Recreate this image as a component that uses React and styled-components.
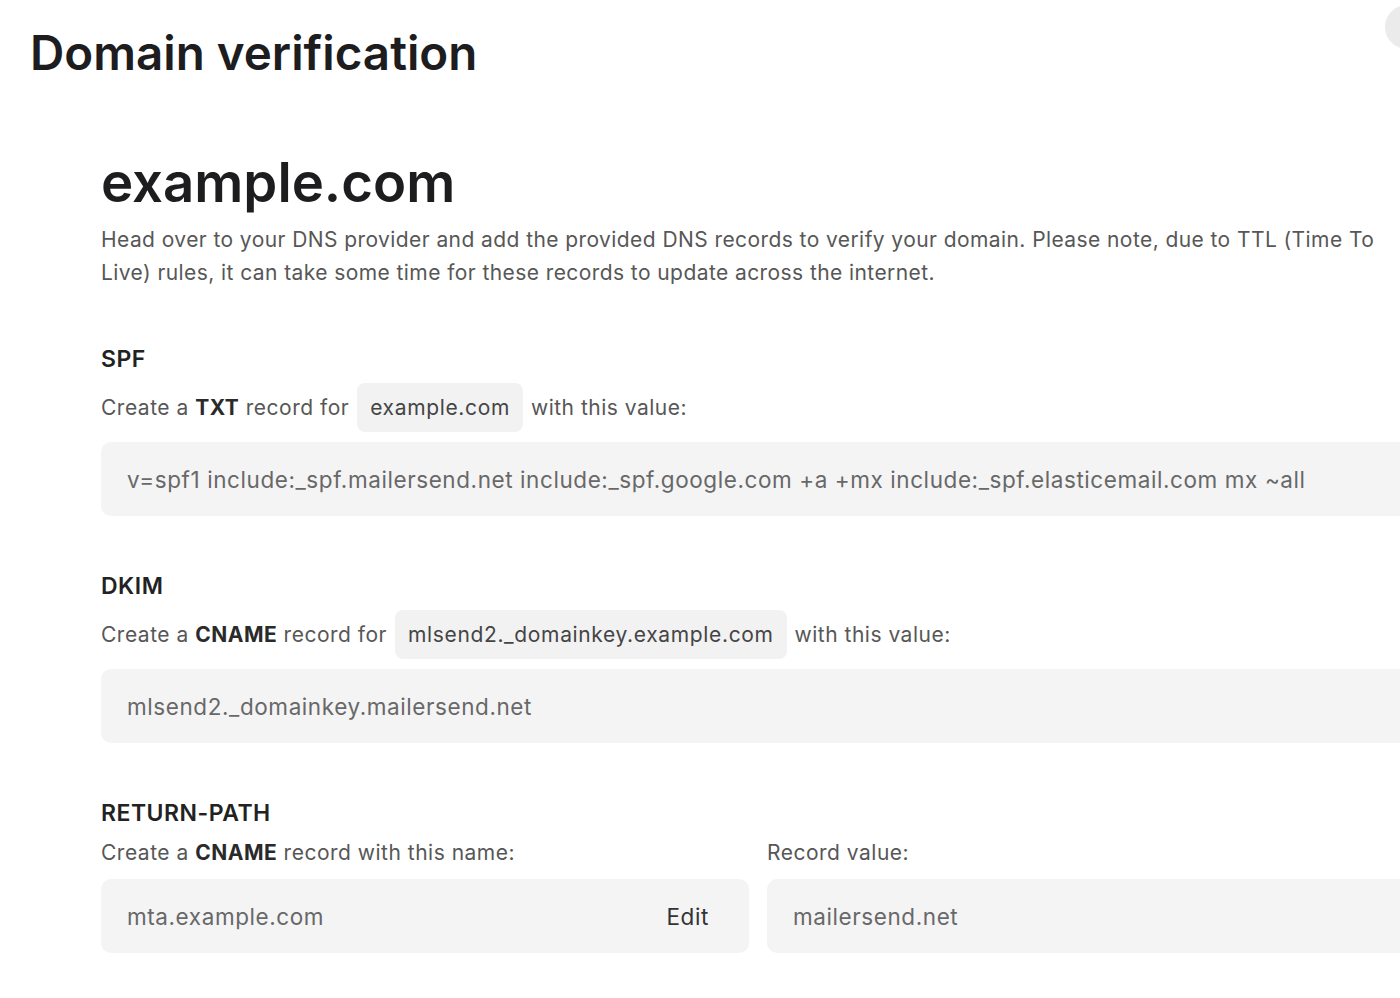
import React from 'react'
import styled, { createGlobalStyle } from 'styled-components'

const GlobalStyle = createGlobalStyle`
    html, body {
        margin: 0;
        padding: 0;
        background: #ffffff;
        overflow: hidden;
    }
    body {
        font-family: Inter, "Noto Sans", "Liberation Sans", sans-serif;
        -webkit-font-smoothing: antialiased;
    }
`;

const Page = styled.div`
    width: 1460px;
    min-height: 998px;
`;

const Header = styled.header`
    display: flex;
    justify-content: space-between;
    align-items: flex-start;
    padding: 0 31px 0 30px;
`;

const PageTitle = styled.h1`
    margin: 24px 0 0;
    font-size: 47.5px;
    line-height: 1.2;
    font-weight: 600;
    color: #1d1d1f;
`;

const Avatar = styled.div`
    width: 44px;
    height: 44px;
    margin-top: 5px;
    border-radius: 50%;
    background: #ebebeb;
`;

const Content = styled.main`
    width: 1314px;
    padding: 69px 0 40px 101px;
`;

const Domain = styled.h2`
    margin: 0;
    font-size: 54.5px;
    line-height: 1.2;
    font-weight: 600;
    color: #1d1d1f;
`;

const Description = styled.p`
    margin: 8px 0 0;
    font-size: 21px;
    line-height: 33px;
    letter-spacing: 0.42px;
    color: #575757;
`;

const Section = styled.section`
    margin-top: 55px;
`;

const SectionTitle = styled.h3`
    margin: 0 0 ${p => p.$gap || 9}px;
    font-size: 23px;
    line-height: 30px;
    font-weight: 600;
    letter-spacing: 0.5px;
    color: #222222;
`;

const Instruction = styled.div`
    display: flex;
    align-items: center;
    gap: 8px;
    min-height: 49px;
    font-size: 21px;
    letter-spacing: 0.5px;
    color: #575757;

    b {
        font-weight: 700;
        color: #2a2a2a;
    }
`;

const Chip = styled.span`
    display: inline-flex;
    align-items: center;
    height: 49px;
    padding: 0 13px;
    border-radius: 8px;
    background: #f2f2f3;
    color: #454545;
    font-size: 21px;
    letter-spacing: 0.65px;
`;

const ValueBox = styled.div`
    display: flex;
    align-items: center;
    justify-content: space-between;
    height: 74px;
    margin-top: ${p => p.$top ?? 10}px;
    padding: 0 40px 0 26px;
    border-radius: 10px;
    background: #f4f4f5;
    font-size: 22.5px;
    letter-spacing: 0.58px;
    color: #686868;
    white-space: nowrap;
`;

const EditButton = styled.span`
    color: #333333;
    font-size: 22.5px;
    letter-spacing: 0.6px;
    cursor: pointer;
`;

const Columns = styled.div`
    display: grid;
    grid-template-columns: 1fr 1fr;
    column-gap: 18px;
`;

const Label = styled.div`
    font-size: 21px;
    line-height: 30px;
    letter-spacing: 0.5px;
    color: #575757;
    margin-bottom: 11px;

    b {
        font-weight: 700;
        color: #2a2a2a;
    }
`;

export default function App() {
    return (
        <Page>
            <GlobalStyle />
            <Header>
                <PageTitle>Domain verification</PageTitle>
                <Avatar />
            </Header>
            <Content>
                <Domain>example.com</Domain>
                <Description>
                    Head over to your DNS provider and add the provided DNS records to verify your domain. Please note, due to TTL (Time To Live) rules, it can take some time for these records to update across the internet.
                </Description>

                <Section>
                    <SectionTitle>SPF</SectionTitle>
                    <Instruction>
                        <span>Create a <b>TXT</b> record for</span>
                        <Chip>example.com</Chip>
                        <span>with this value:</span>
                    </Instruction>
                    <ValueBox>v=spf1 include:_spf.mailersend.net include:_spf.google.com +a +mx include:_spf.elasticemail.com mx ~all</ValueBox>
                </Section>

                <Section>
                    <SectionTitle>DKIM</SectionTitle>
                    <Instruction>
                        <span>Create a <b>CNAME</b> record for</span>
                        <Chip>mlsend2._domainkey.example.com</Chip>
                        <span>with this value:</span>
                    </Instruction>
                    <ValueBox>mlsend2._domainkey.mailersend.net</ValueBox>
                </Section>

                <Section>
                    <SectionTitle $gap={10}>RETURN-PATH</SectionTitle>
                    <Columns>
                        <div>
                            <Label>Create a <b>CNAME</b> record with this name:</Label>
                            <ValueBox $top={0}>
                                mta.example.com
                                <EditButton>Edit</EditButton>
                            </ValueBox>
                        </div>
                        <div>
                            <Label>Record value:</Label>
                            <ValueBox $top={0}>mailersend.net</ValueBox>
                        </div>
                    </Columns>
                </Section>
            </Content>
        </Page>
    )
}
